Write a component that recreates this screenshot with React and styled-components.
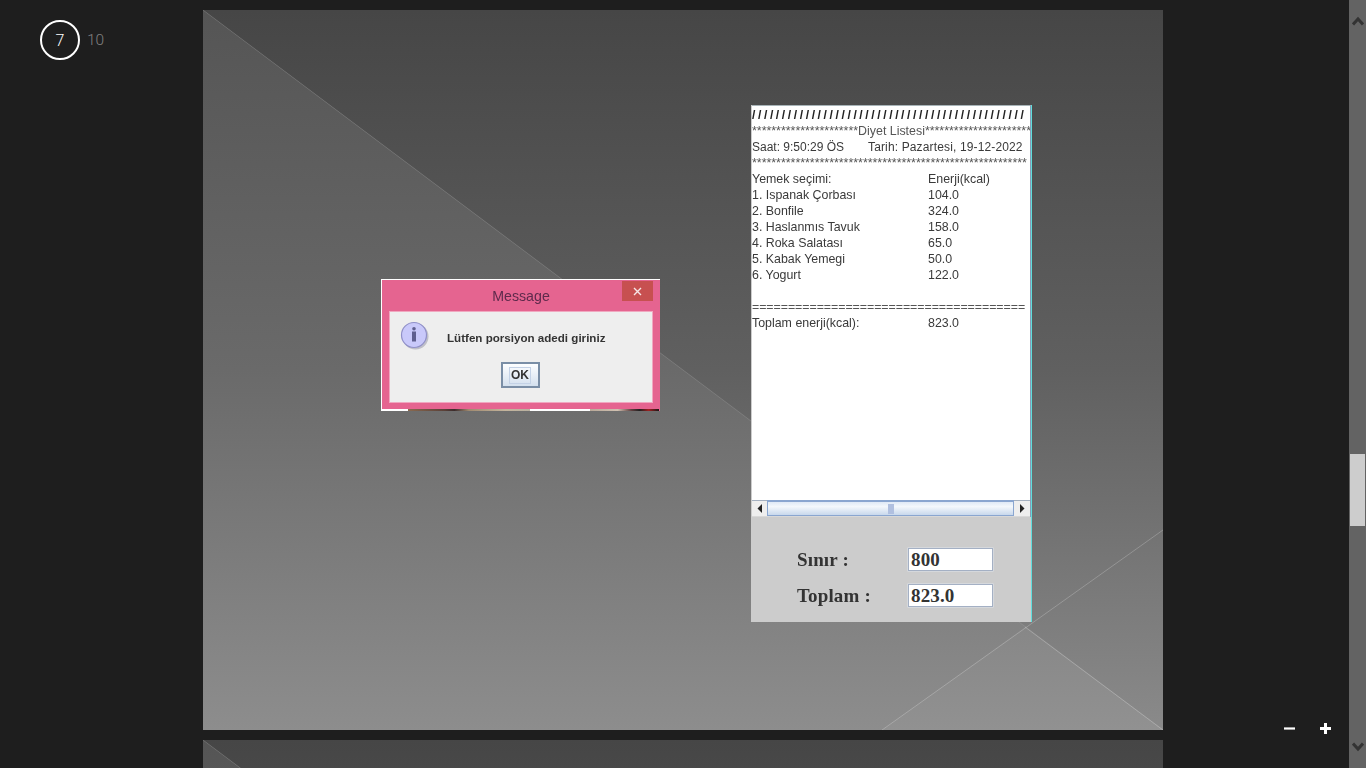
import styled, { createGlobalStyle } from "styled-components";

const GlobalStyle = createGlobalStyle`
  html, body {
    margin: 0;
    height: 100%;
    overflow: hidden;
    background: #1e1e1e;
  }
`;

const foods = [
  { name: "1. Ispanak Çorbası", kcal: "104.0" },
  { name: "2. Bonfile", kcal: "324.0" },
  { name: "3. Haslanmıs Tavuk", kcal: "158.0" },
  { name: "4. Roka Salatası", kcal: "65.0" },
  { name: "5. Kabak Yemegi", kcal: "50.0" },
  { name: "6. Yogurt", kcal: "122.0" },
];

function Backdrop({ id }) {
  return (
    <BackdropSvg viewBox="0 0 960 720" preserveAspectRatio="none">
      <defs>
        <linearGradient id={`${id}-upper`} x1="0" y1="0" x2="0" y2="720" gradientUnits="userSpaceOnUse">
          <stop offset="0" stopColor="#464646" />
          <stop offset="0.5" stopColor="#606060" />
          <stop offset="1" stopColor="#8a8a8a" />
        </linearGradient>
        <linearGradient id={`${id}-lower`} x1="0" y1="0" x2="0" y2="720" gradientUnits="userSpaceOnUse">
          <stop offset="0" stopColor="#555555" />
          <stop offset="0.5" stopColor="#6a6a6a" />
          <stop offset="1" stopColor="#8d8d8d" />
        </linearGradient>
      </defs>
      <polygon points="0,0 960,0 960,720" fill={`url(#${id}-upper)`} />
      <polygon points="0,0 960,720 0,720" fill={`url(#${id}-lower)`} />
      <polygon points="679,720 822,617 960,720" fill="#fff" opacity="0.04" />
      <line x1="0" y1="0" x2="960" y2="720" stroke="#fff" strokeOpacity="0.13" />
      <line x1="679" y1="720" x2="960" y2="520" stroke="#fff" strokeOpacity="0.22" />
      <line x1="822" y1="617" x2="960" y2="720" stroke="#fff" strokeOpacity="0.22" />
    </BackdropSvg>
  );
}

function InfoIcon() {
  return (
    <svg width="32" height="32" viewBox="0 0 32 32">
      <circle cx="15.5" cy="15.5" r="13" fill="#77778f" opacity="0.4" />
      <circle cx="14" cy="14" r="12.5" fill="#c9c9fa" stroke="#9090c8" strokeWidth="1.2" />
      <circle cx="14" cy="7.8" r="1.8" fill="#5f5f8f" />
      <path d="M12 10.5 H16 V20.5 H12 Z" fill="#5f5f8f" />
    </svg>
  );
}

function ArrowGlyph({ left }) {
  return (
    <svg width="6" height="9" viewBox="0 0 6 9">
      <polygon points={left ? "5,0 5,9 0.5,4.5" : "1,0 1,9 5.5,4.5"} fill="#222" />
    </svg>
  );
}

function Chevron({ up }) {
  return (
    <svg width="12" height="10" viewBox="0 0 12 10">
      <path d={up ? "M1 8.5 L6 3 L11 8.5" : "M1 1.5 L6 7 L11 1.5"} fill="none" stroke="#333" strokeWidth="3" />
    </svg>
  );
}

export default function App() {
  return (
    <Page>
      <GlobalStyle />
      <Viewer>
        <Counter>
          <CurrentPage>7</CurrentPage>
          <TotalPages>10</TotalPages>
        </Counter>
        <Slides>
          <Slide>
            <Backdrop id="first" />
            <DietWindow>
              <ListPane>
                <ListText>
                  <SlashRow>{"/".repeat(46)}</SlashRow>
                  <StarRow>{"*".repeat(22)}Diyet Listesi{"*".repeat(22)}</StarRow>
                  <ClockRow>
                    <ClockTime>Saat: 9:50:29 ÖS</ClockTime>
                    <ClockDate>Tarih: Pazartesi, 19-12-2022</ClockDate>
                  </ClockRow>
                  <StarRow>{"*".repeat(57)}</StarRow>
                  <FoodRow>
                    <span>Yemek seçimi:</span>
                    <span>Enerji(kcal)</span>
                  </FoodRow>
                  {foods.map((food) => (
                    <FoodRow key={food.name}>
                      <span>{food.name}</span>
                      <span>{food.kcal}</span>
                    </FoodRow>
                  ))}
                  <Row>&nbsp;</Row>
                  <RuleRow>{"=".repeat(38)}</RuleRow>
                  <FoodRow>
                    <span>Toplam enerji(kcal):</span>
                    <span>823.0</span>
                  </FoodRow>
                </ListText>
                <HScroll>
                  <HArrow><ArrowGlyph left /></HArrow>
                  <HTrack><HGrip /></HTrack>
                  <HArrow $wide><ArrowGlyph /></HArrow>
                </HScroll>
              </ListPane>
              <TotalsPanel>
                <TotalsRow>
                  <TotalsLabel>Sınır :</TotalsLabel>
                  <TotalsInput>800</TotalsInput>
                </TotalsRow>
                <TotalsRow>
                  <TotalsLabel>Toplam :</TotalsLabel>
                  <TotalsInput>823.0</TotalsInput>
                </TotalsRow>
              </TotalsPanel>
            </DietWindow>
            <Dialog>
              <TitleBar>
                <DialogTitle>Message</DialogTitle>
                <CloseButton>
                  <svg width="9" height="9" viewBox="0 0 9 9">
                    <path d="M1 1 L8 8 M8 1 L1 8" stroke="#f6e6e6" strokeWidth="1.4" />
                  </svg>
                </CloseButton>
              </TitleBar>
              <DialogBody>
                <MessageRow>
                  <InfoIcon />
                  <MessageText>Lütfen porsiyon adedi giriniz</MessageText>
                </MessageRow>
                <OkButton><OkLabel>OK</OkLabel></OkButton>
              </DialogBody>
              <PhotoStrip>
                <StripPiece $width={27} $fill="#ffffff" />
                <StripPiece $width={122} $fill="linear-gradient(90deg, #8a6a50, #5a4038 30%, #3c2c2c 38%, #a08a70 50%, #c4b49c 80%, #b8b0a0)" />
                <StripPiece $width={60} $fill="#ffffff" />
                <StripPiece $width={69} $fill="linear-gradient(90deg, #b8a898, #d0c0b0 40%, #604040 60%, #202020 72%, #a02020 85%, #181818)" />
              </PhotoStrip>
            </Dialog>
          </Slide>
          <Slide>
            <Backdrop id="second" />
          </Slide>
        </Slides>
        <ZoomControls>
          <ZoomButton>
            <svg width="11" height="11" viewBox="0 0 11 11"><rect x="0" y="4.4" width="11" height="2.2" fill="#fff" /></svg>
          </ZoomButton>
          <ZoomButton>
            <svg width="11" height="11" viewBox="0 0 11 11"><path d="M0 4 H4 V0 H7 V4 H11 V7 H7 V11 H4 V7 H0 Z" fill="#fff" /></svg>
          </ZoomButton>
        </ZoomControls>
      </Viewer>
      <Scrollbar>
        <ScrollArrow><Chevron up /></ScrollArrow>
        <ScrollTrack><ScrollThumb /></ScrollTrack>
        <ScrollArrow><Chevron /></ScrollArrow>
      </Scrollbar>
    </Page>
  );
}

const Page = styled.div`
  display: flex;
  width: 1366px;
  height: 768px;
  overflow: hidden;
  background: #1e1e1e;
`;

const Viewer = styled.main`
  position: relative;
  flex: 1;
  overflow: hidden;
`;

const Counter = styled.div`
  position: absolute;
  top: 20px;
  left: 40px;
  display: flex;
  align-items: center;
  gap: 7px;
  font: 300 16px Roboto, sans-serif;
`;

const CurrentPage = styled.div`
  display: flex;
  align-items: center;
  justify-content: center;
  box-sizing: border-box;
  width: 40px;
  height: 40px;
  border: 2px solid #fff;
  border-radius: 50%;
  color: #fff;
`;

const TotalPages = styled.div`
  color: #808080;
  font-size: 15.5px;
`;

const Slides = styled.div`
  display: flex;
  flex-direction: column;
  gap: 10px;
  padding: 10px 0 0 203px;
`;

const Slide = styled.section`
  position: relative;
  flex: none;
  width: 960px;
  height: 720px;
  background: #666;
`;

const BackdropSvg = styled.svg`
  display: block;
  width: 100%;
  height: 100%;
`;

const DietWindow = styled.div`
  position: absolute;
  left: 548px;
  top: 95px;
  display: flex;
  flex-direction: column;
  box-sizing: border-box;
  width: 281px;
  height: 517px;
  border-right: 1px solid #5fdede;
  background: #cccccc;
`;

const ListPane = styled.div`
  display: flex;
  flex-direction: column;
  box-sizing: border-box;
  height: 412px;
  margin-left: 1px;
  border-top: 1px solid #a8b4b8;
  border-right: 1px solid #8a9cb4;
  background: #fff;
`;

const ListText = styled.div`
  flex: 1;
  padding-top: 1px;
  overflow: hidden;
  color: #3a3a3a;
  font: 12.4px/16px "Liberation Sans", Arial, sans-serif;
  white-space: nowrap;
  filter: blur(0.35px);
`;

const Row = styled.div`
  height: 16px;
`;

const SlashRow = styled(Row)`
  color: #222;
  font-size: 12px;
  font-weight: bold;
  letter-spacing: 2.63px;
`;

const StarRow = styled(Row)`
  color: #555;
`;

const RuleRow = styled(Row)`
  color: #555;
  letter-spacing: -0.05px;
`;

const ClockRow = styled(Row)`
  display: flex;
  font-size: 12px;
`;

const ClockTime = styled.span`
  width: 116px;
`;

const ClockDate = styled.span`
  letter-spacing: 0.14px;
`;

const FoodRow = styled(Row)`
  display: grid;
  grid-template-columns: 176px 1fr;
`;

const HScroll = styled.div`
  display: flex;
  flex: none;
  height: 16px;
  border-bottom: 1px solid #d8d8d8;
`;

const HArrow = styled.div`
  display: flex;
  align-items: center;
  justify-content: center;
  width: ${(props) => (props.$wide ? 16 : 15)}px;
  background: #eeeeee;
  border-top: 1px solid #a4b0c0;
  box-sizing: border-box;
`;

const HTrack = styled.div`
  flex: 1;
  display: flex;
  align-items: center;
  justify-content: center;
  border: 1px solid #8aa6d0;
  border-top-width: 2px;
  background: linear-gradient(#dfe9f6, #f4f8fc 35%, #c8d8ec);
`;

const HGrip = styled.div`
  width: 6px;
  height: 10px;
  background: #b0c0e0;
`;

const TotalsPanel = styled.div`
  flex: 1;
  display: flex;
  flex-direction: column;
  gap: 13px;
  padding: 31px 0 0 46px;
`;

const TotalsRow = styled.div`
  display: flex;
  align-items: center;
`;

const TotalsLabel = styled.div`
  width: 111px;
  color: #333;
  font: bold 19px "Liberation Serif", "Times New Roman", serif;
  letter-spacing: 0.15px;
  filter: blur(0.3px);
`;

const TotalsInput = styled.div`
  box-sizing: border-box;
  width: 85px;
  height: 23px;
  padding-left: 2px;
  border: 1px solid #a4b0c4;
  background: #fff;
  box-shadow: 0 0 0 0.5px #dde3ec;
  color: #333;
  font: bold 19px/21px "Liberation Serif", "Times New Roman", serif;
  letter-spacing: 0.15px;
`;

const Dialog = styled.div`
  position: absolute;
  left: 178px;
  top: 269px;
  display: flex;
  flex-direction: column;
  box-sizing: border-box;
  width: 279px;
  height: 132px;
  padding-top: 1px;
  background: #e56490;
  border-top: 1px solid #fff;
  border-left: 1px solid #fff;
`;

const TitleBar = styled.div`
  position: relative;
  display: flex;
  align-items: center;
  justify-content: center;
  height: 30px;
  flex: none;
`;

const DialogTitle = styled.div`
  color: #5e2a4c;
  font: 14.2px "Liberation Sans", Arial, sans-serif;
  filter: blur(0.3px);
  margin-bottom: 1px;
`;

const CloseButton = styled.div`
  position: absolute;
  top: 0;
  right: 7px;
  display: flex;
  align-items: center;
  justify-content: center;
  width: 31px;
  height: 20px;
  background: #c75050;
`;

const DialogBody = styled.div`
  display: flex;
  flex-direction: column;
  align-items: center;
  box-sizing: border-box;
  flex: none;
  width: 264px;
  height: 92px;
  margin-left: 7px;
  border: 1px solid #f0a8c0;
  background: #eeeeee;
`;

const MessageRow = styled.div`
  display: flex;
  align-self: stretch;
  align-items: center;
  height: 50px;
  padding-left: 10px;
  gap: 15px;
`;

const MessageText = styled.div`
  color: #333;
  font: bold 11.6px "Liberation Sans", Arial, sans-serif;
  margin-top: 1px;
  filter: blur(0.3px);
`;

const OkButton = styled.div`
  display: flex;
  align-items: center;
  justify-content: center;
  box-sizing: border-box;
  width: 39px;
  height: 26px;
  margin-right: 2px;
  border: 2px solid #7a8ea6;
  background: linear-gradient(#fdfeff, #d4e0ee);
`;

const OkLabel = styled.div`
  padding: 0 1px;
  border: 1px solid #c4d2e6;
  color: #333;
  font: bold 12px/15px "Liberation Sans", Arial, sans-serif;
  filter: blur(0.3px);
`;

const PhotoStrip = styled.div`
  display: flex;
  flex: none;
  height: 2px;
  margin-top: 6px;
  margin-left: -1px;
`;

const StripPiece = styled.div`
  width: ${(props) => props.$width}px;
  background: ${(props) => props.$fill};
`;

const ZoomControls = styled.div`
  position: absolute;
  left: 1284px;
  top: 723px;
  display: flex;
  gap: 25px;
`;

const ZoomButton = styled.div`
  display: flex;
  width: 11px;
  height: 11px;
`;

const Scrollbar = styled.aside`
  display: flex;
  flex-direction: column;
  flex: none;
  width: 17px;
  background: #636363;
`;

const ScrollArrow = styled.div`
  display: flex;
  align-items: center;
  justify-content: center;
  flex: none;
  height: 42px;
`;

const ScrollTrack = styled.div`
  flex: 1;
  padding: 412px 1px 0;
`;

const ScrollThumb = styled.div`
  height: 72px;
  background: #cdcdcd;
`;
